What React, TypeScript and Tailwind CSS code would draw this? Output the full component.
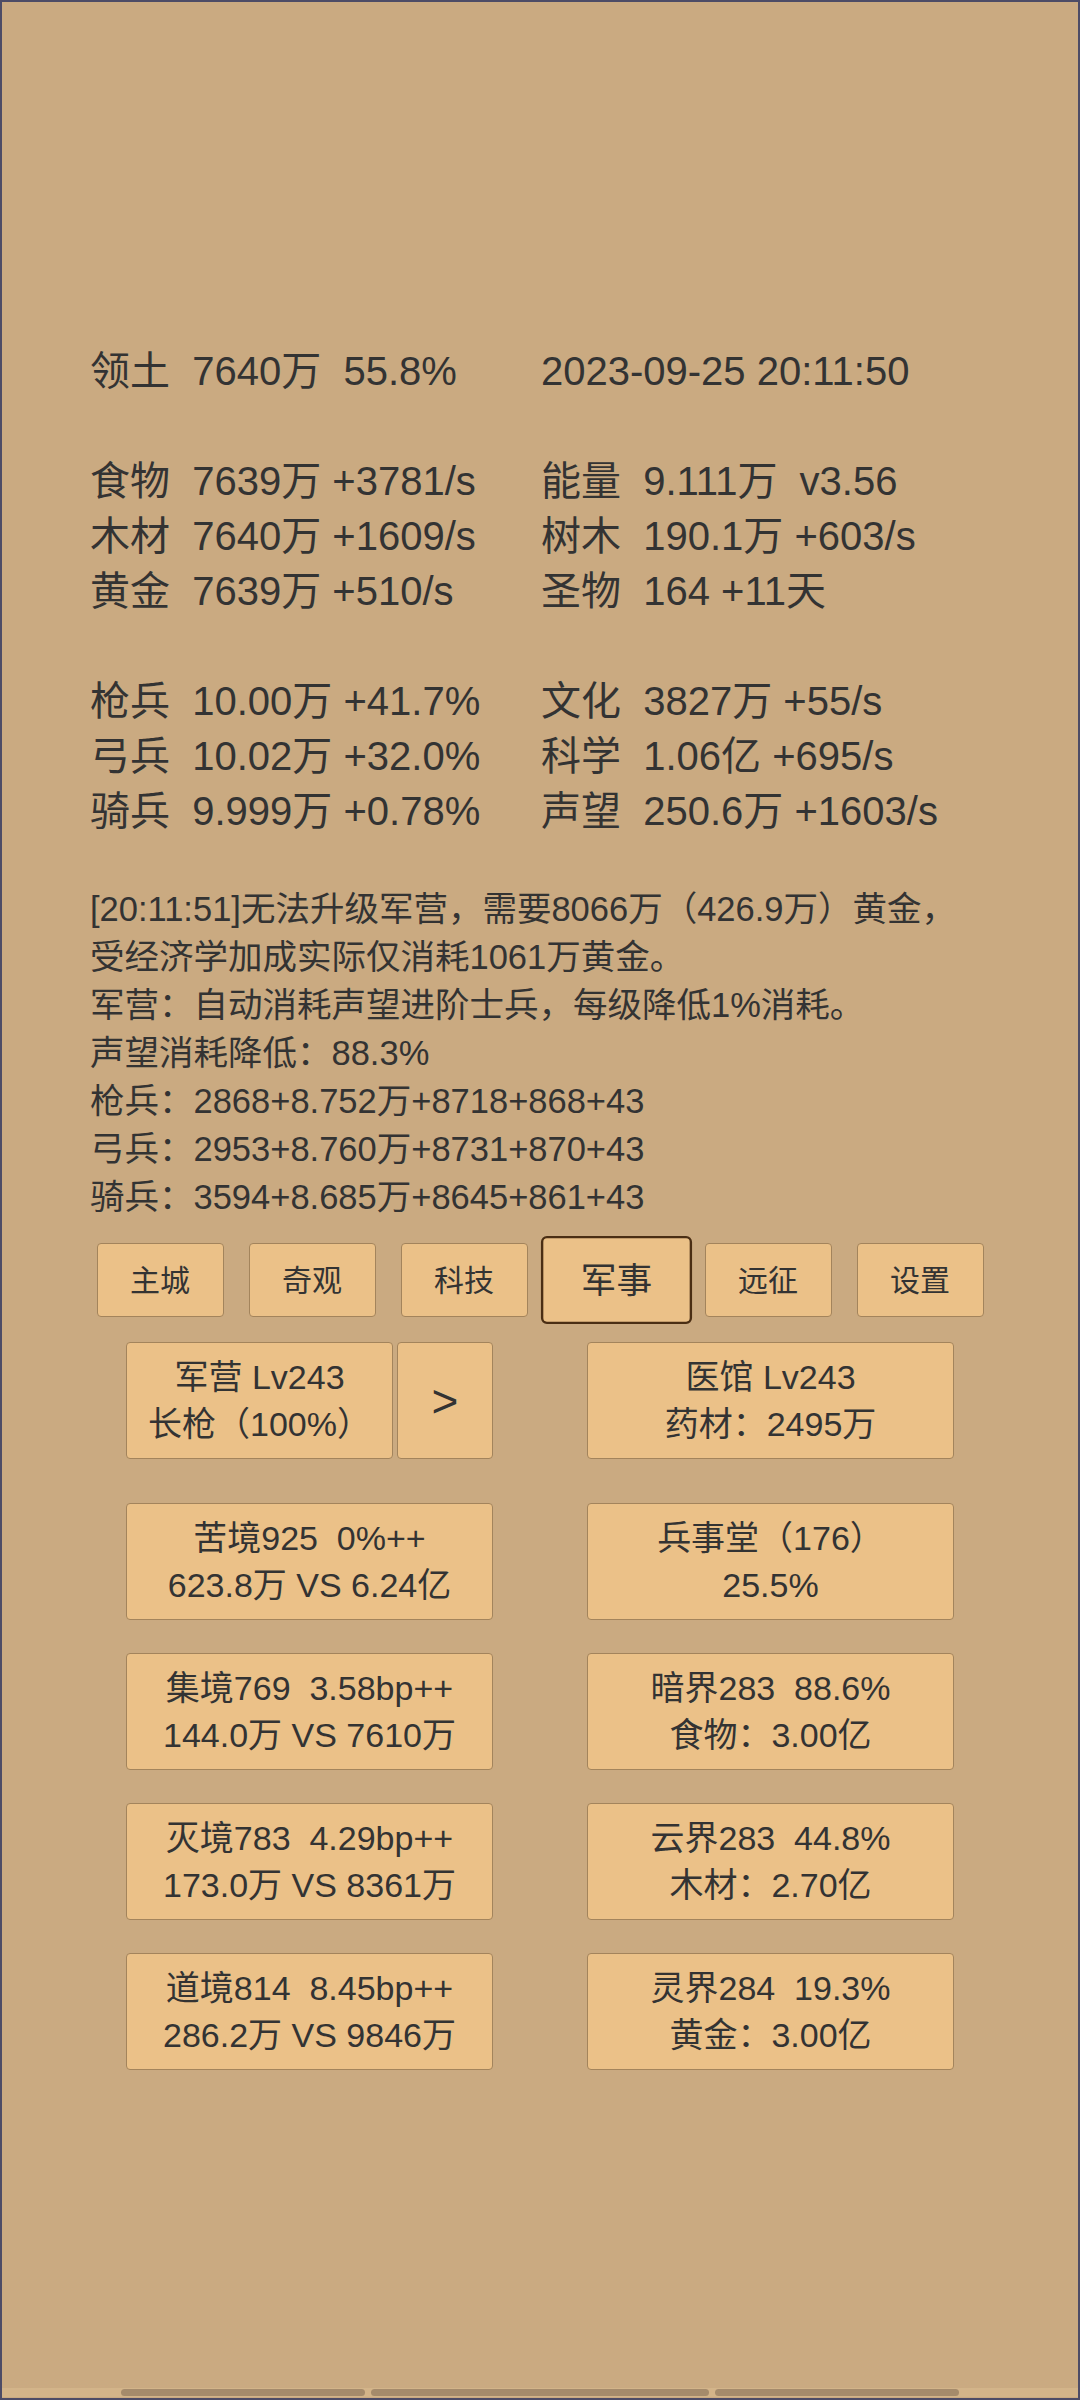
import React from "react";

const leftStats = [
  "领土  7640万  55.8%",
  "",
  "食物  7639万 +3781/s",
  "木材  7640万 +1609/s",
  "黄金  7639万 +510/s",
  "",
  "枪兵  10.00万 +41.7%",
  "弓兵  10.02万 +32.0%",
  "骑兵  9.999万 +0.78%",
];

const rightStats = [
  "2023-09-25 20:11:50",
  "",
  "能量  9.111万  v3.56",
  "树木  190.1万 +603/s",
  "圣物  164 +11天",
  "",
  "文化  3827万 +55/s",
  "科学  1.06亿 +695/s",
  "声望  250.6万 +1603/s",
];

const messages = [
  "[20:11:51]无法升级军营，需要8066万（426.9万）黄金，",
  "受经济学加成实际仅消耗1061万黄金。",
  "军营：自动消耗声望进阶士兵，每级降低1%消耗。",
  "声望消耗降低：88.3%",
  "枪兵：2868+8.752万+8718+868+43",
  "弓兵：2953+8.760万+8731+870+43",
  "骑兵：3594+8.685万+8645+861+43",
];

const tabs = ["主城", "奇观", "科技", "军事", "远征", "设置"];

const rows: [string, string][][] = [
  [
    ["苦境925  0%++", "623.8万 VS 6.24亿"],
    ["兵事堂（176）", "25.5%"],
  ],
  [
    ["集境769  3.58bp++", "144.0万 VS 7610万"],
    ["暗界283  88.6%", "食物：3.00亿"],
  ],
  [
    ["灭境783  4.29bp++", "173.0万 VS 8361万"],
    ["云界283  44.8%", "木材：2.70亿"],
  ],
  [
    ["道境814  8.45bp++", "286.2万 VS 9846万"],
    ["灵界284  19.3%", "黄金：3.00亿"],
  ],
];

function Box({
  lines,
  className = "",
  children,
}: {
  lines: string[];
  className?: string;
  children?: React.ReactNode;
}) {
  return (
    <div
      className={`h-[117px] flex flex-col items-center justify-center bg-[#ebc188] border border-[#a3845c] rounded-[4px] text-[34px] leading-[47px] whitespace-pre ${className}`}
    >
      {lines.map((l) => (
        <div key={l}>{l}</div>
      ))}
      {children}
    </div>
  );
}

export default function App() {
  return (
    <div className="w-[1080px] h-[2400px] border-2 border-[#4d4c66] bg-[#caaa81] text-[#333333] font-['Liberation_Sans','Noto_Sans_CJK_SC',sans-serif] flex flex-col overflow-hidden">
      {/* stats */}
      <div className="pt-[342px] pl-[88px] grid grid-cols-[451px_1fr] text-[40px] leading-[55px] whitespace-pre">
        {leftStats.map((l, i) => (
          <React.Fragment key={i}>
            <div className="h-[55px]">{l}</div>
            <div className="h-[55px]">{rightStats[i]}</div>
          </React.Fragment>
        ))}
      </div>

      {/* log */}
      <div className="mt-[46px] pl-[88px] text-[34.5px] leading-[48px] whitespace-pre">
        {messages.map((m) => (
          <div key={m}>{m}</div>
        ))}
      </div>

      {/* tabs */}
      <div className="mt-[22px] flex justify-center">
        {tabs.map((t) => {
          const active = t === "军事";
          return (
            <button
              key={t}
              className={
                active
                  ? "relative z-10 w-[127px] h-[74px] mx-[12.5px] bg-[#ebc188] border-2 border-[#4a2e14] rounded-[5px] text-[30px] scale-[1.19]"
                  : "w-[127px] h-[74px] mx-[12.5px] bg-[#ebc188] border border-[#a3845c] rounded-[4px] text-[30px]"
              }
            >
              {t}
            </button>
          );
        })}
      </div>

      {/* buildings */}
      <div className="mt-[25px] mx-auto w-[828px] grid grid-cols-[367px_367px] justify-between">
        <div className="flex gap-[4px]">
          <Box lines={["军营 Lv243", "长枪（100%）"]} className="w-[267px]" />
          <Box lines={[]} className="w-[96px]">
            <span className="text-[46px] leading-none">&gt;</span>
          </Box>
        </div>
        <Box lines={["医馆 Lv243", "药材：2495万"]} />
      </div>
      <div className="mt-[44px] mx-auto w-[828px] grid grid-cols-[367px_367px] justify-between gap-y-[33px]">
        {rows.map((r, i) => (
          <React.Fragment key={i}>
            <Box lines={r[0]} />
            <Box lines={r[1]} />
          </React.Fragment>
        ))}
      </div>

      {/* bottom pager */}
      <div className="mt-auto mb-[1px] h-[9px] flex items-center justify-center gap-[6px] bg-[#d3b489]">
        <div className="w-[244px] h-[7px] rounded-full bg-[#a58b6b]" />
        <div className="w-[338px] h-[7px] rounded-full bg-[#a58b6b]" />
        <div className="w-[244px] h-[7px] rounded-full bg-[#a58b6b]" />
      </div>
    </div>
  );
}
